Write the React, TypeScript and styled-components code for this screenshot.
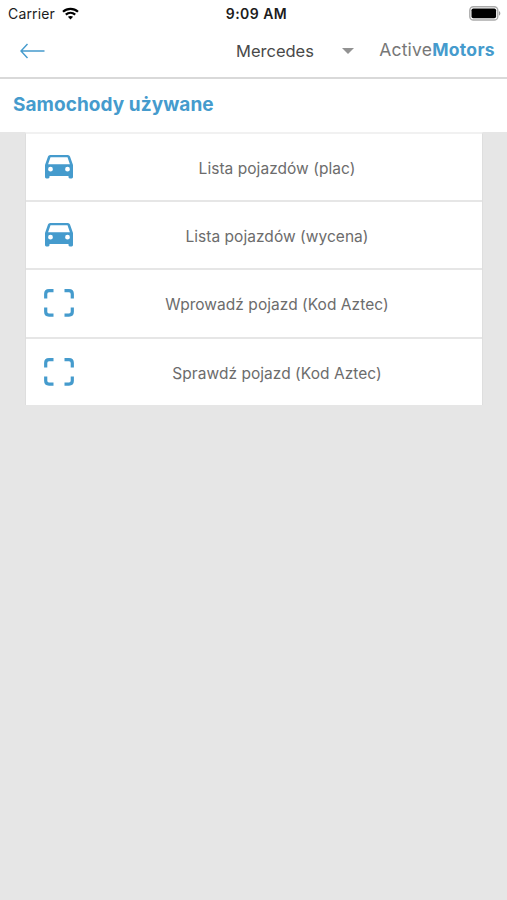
import React from "react";
import styled, { createGlobalStyle } from "styled-components";

const BLUE = "#459bcd";

const GlobalStyle = createGlobalStyle`
  * { box-sizing: border-box; }
  body { margin: 0; background: #e6e6e6; font-family: Inter, "Liberation Sans", sans-serif; }
`;

const Screen = styled.div`
  display: flex;
  flex-direction: column;
  width: 507px;
  height: 900px;
  overflow: hidden;
  background: #e6e6e6;
`;

const StatusBar = styled.div`
  display: grid;
  grid-template-columns: 1fr auto 1fr;
  align-items: center;
  height: 27px;
  padding: 0 6px 0 8px;
  background: #fff;
  color: #1c1c1c;
  font-size: 14px;
  line-height: 18px;
`;

const Carrier = styled.div`
  display: flex;
  align-items: center;
  gap: 7px;
  letter-spacing: 0.15px;
`;

const Clock = styled.div`
  padding-left: 4px;
  font-weight: 600;
  letter-spacing: 0.45px;
`;

const BatterySlot = styled.div`
  display: flex;
  justify-content: flex-end;
`;

const NavBar = styled.header`
  display: flex;
  align-items: center;
  height: 52px;
  padding: 0 12px 2px 20px;
  border-bottom: 2px solid #d9d9d9;
  background: #fff;
`;

const BackButton = styled.button`
  display: flex;
  width: 216px;
  padding: 0;
  border: 0;
  background: none;
`;

const BrandSelect = styled.div`
  display: flex;
  align-items: center;
  justify-content: space-between;
  width: 118px;
  color: #494949;
  font-size: 16.5px;
  line-height: 22px;
`;

const Logo = styled.div`
  flex: 1;
  padding-bottom: 3px;
  text-align: right;
  white-space: nowrap;
  color: #777;
  font-size: 17.5px;
  line-height: 22px;
  letter-spacing: 0.2px;
`;

const LogoAccent = styled.span`
  color: ${BLUE};
  font-weight: 700;
  letter-spacing: 0.32px;
`;

const Heading = styled.h1`
  height: 53px;
  margin: 0;
  padding: 0 13px;
  background: #fff;
  color: ${BLUE};
  font-size: 19px;
  font-weight: 650;
  line-height: 52px;
  letter-spacing: 0.06px;
`;

const Menu = styled.ul`
  display: flex;
  flex-direction: column;
  width: 458px;
  margin: 0 0 0 25px;
  padding: 0;
  list-style: none;
  border: 1px solid #dedede;
  border-top: 2px solid #f1f1f1;
  border-bottom: 0;
`;

const MenuItem = styled.li<{ $height: number }>`
  display: flex;
  align-items: center;
  height: ${(p) => p.$height}px;
  padding-left: 14px;
  background: #fff;

  & + & { border-top: 2px solid #e6e6e6; }
`;

const IconBox = styled.span`
  display: flex;
  width: 38px;
  padding-bottom: 1px;
`;

const Label = styled.span<{ $drop: number }>`
  flex: 1;
  padding: ${(p) => p.$drop}px 6px 0 0;
  text-align: center;
  color: #6c6c6c;
  font-size: 15.5px;
  line-height: 20px;
  letter-spacing: 0.04px;
`;

const WifiIcon = () => (
  <svg width="17" height="13" viewBox="0 0 17 13" fill="none" stroke="#000" strokeWidth="2.2">
    <path d="M1 4.7C5.2.8 11.8.8 16 4.7" />
    <path d="M3.8 7.6c2.7-2.4 6.7-2.4 9.4 0" />
    <path d="M8.5 12.4 5.9 9.8c1.4-1.2 3.8-1.2 5.2 0Z" fill="#000" stroke="none" />
  </svg>
);

const BatteryIcon = () => (
  <svg width="32" height="15" viewBox="0 0 32 15">
    <rect x=".8" y=".8" width="28" height="13.2" rx="3.6" fill="#fff" stroke="#aaa" strokeWidth="1.4" />
    <rect x="2.5" y="2.5" width="24.6" height="9.8" rx="1.8" fill="#000" />
    <path d="M30 5v4.8c1.8-.8 1.8-4 0-4.8Z" fill="#999" />
  </svg>
);

const BackIcon = () => (
  <svg width="25" height="16" viewBox="0 0 25 16" fill="none" stroke={BLUE} strokeWidth="1.4">
    <path d="M24.5 8H1M7.5 1 1 8l6.5 7" />
  </svg>
);

const CaretIcon = () => (
  <svg width="12" height="6" viewBox="0 0 12 6">
    <path d="M0 0h12L6 6Z" fill="#929292" />
  </svg>
);

const CarIcon = () => (
  <svg width="38" height="35" viewBox="0 0 38 35" fill={BLUE} fillRule="evenodd">
    <path d="M10.2 6h17.6q1.7 0 2.2 1.5L33 16v12q0 1.4-1.3 1.4h-1.9q-1.3 0-1.3-1.4v-1.1h-19V28q0 1.4-1.3 1.4H6.3Q5 29.400 5 28V16l3-8.500Q8.500 6 10.2 6ZM10.500 8.200 8.100 15.300H29.900L27.500 8.200ZM10.500 17.800a2.400 2.400 0 1 0 0 4.800a2.400 2.400 0 1 0 0-4.800ZM27.500 17.800a2.400 2.400 0 1 0 0 4.800a2.400 2.400 0 1 0 0-4.800Z" />
  </svg>
);

const ScanIcon = () => (
  <svg width="38" height="36" viewBox="0 0 38 36" fill="none" stroke={BLUE} strokeWidth="3.2">
    <path d="M5.7 13.5V9q0-3.3 3.3-3.3h4.500M24.500 5.700H29q3.300 0 3.300 3.300v4.500M32.300 22.500v4.300q0 3.300-3.300 3.300h-4.500M13.500 30.100H9q-3.300 0-3.300-3.300v-4.300" />
  </svg>
);

const items = [
  { label: "Lista pojazdów (plac)", icon: CarIcon, height: 66, drop: 3 },
  { label: "Lista pojazdów (wycena)", icon: CarIcon, height: 68, drop: 4 },
  { label: "Wprowadź pojazd (Kod Aztec)", icon: ScanIcon, height: 69, drop: 2 },
  { label: "Sprawdź pojazd (Kod Aztec)", icon: ScanIcon, height: 68, drop: 4 },
];

export default function App() {
  return (
    <Screen>
      <GlobalStyle />
      <StatusBar>
        <Carrier>Carrier <WifiIcon /></Carrier>
        <Clock>9:09 AM</Clock>
        <BatterySlot><BatteryIcon /></BatterySlot>
      </StatusBar>
      <NavBar>
        <BackButton aria-label="Wstecz"><BackIcon /></BackButton>
        <BrandSelect>Mercedes <CaretIcon /></BrandSelect>
        <Logo>Active<LogoAccent>Motors</LogoAccent></Logo>
      </NavBar>
      <Heading>Samochody używane</Heading>
      <Menu>
        {items.map(({ label, icon: Icon, height, drop }) => (
          <MenuItem key={label} $height={height}>
            <IconBox><Icon /></IconBox>
            <Label $drop={drop}>{label}</Label>
          </MenuItem>
        ))}
      </Menu>
    </Screen>
  );
}
